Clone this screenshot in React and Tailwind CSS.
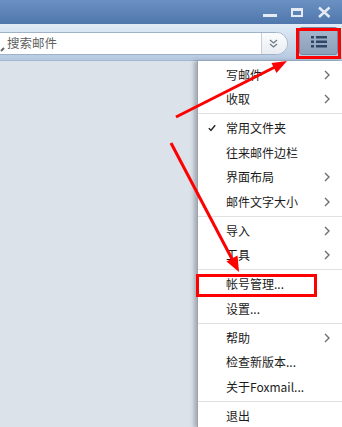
import React from "react";

const Chevron = () => (
  <svg width="6" height="10" viewBox="0 0 6 10" className="absolute right-[12px] top-1/2 -translate-y-1/2">
    <path d="M1 1 L5 5 L1 9" fill="none" stroke="#707070" strokeWidth="1.4" />
  </svg>
);

const Item = ({ label, sub, check }) => (
  <div className="relative h-[24.5px] flex items-center pl-[28px] text-[12px] leading-none text-[#1b1b1b]">
    {check && (
      <svg width="8" height="7" viewBox="0 0 8 7" className="absolute left-[10px] top-1/2 -translate-y-1/2">
        <path d="M0.8 3.6 L2.9 5.9 L7.2 0.8" fill="none" stroke="#222" strokeWidth="1.4" />
      </svg>
    )}
    <span>{label}</span>
    {sub && <Chevron />}
  </div>
);

const Sep = () => (
  <div className="h-[4.5px] flex items-center">
    <div className="h-px w-full bg-[#e1e1e1]" />
  </div>
);

export default function App() {
  return (
    <div className="relative w-[342px] h-[427px] overflow-hidden bg-[#dbe2e9] flex flex-col font-['Noto_Sans_CJK_SC','Noto_Sans',sans-serif]">
      {/* title bar */}
      <div className="h-[24px] shrink-0 bg-gradient-to-b from-[#6b91c2] to-[#5077ad] flex justify-end">
        <svg width="90" height="24" viewBox="252 0 90 24">
          <rect x="263" y="14" width="14" height="3" fill="#e4ebf4" />
          <rect x="292" y="9" width="10" height="7" fill="none" stroke="#e4ebf4" strokeWidth="2" />
          <rect x="291" y="8" width="12" height="3" fill="#e4ebf4" />
          <path d="M319 7.5 L329.5 17 M329.5 7.5 L319 17" stroke="#e4ebf4" strokeWidth="2.4" />
        </svg>
      </div>
      {/* toolbar */}
      <div className="h-[37px] shrink-0 bg-gradient-to-b from-[#e2ecf7] to-[#b5c9e1] border-b border-[#a3b7ce] flex items-start">
        <div className="ml-[-12px] mt-[8px] w-[300px] h-[23px] bg-white border border-[#a0b2c7] rounded-r-full flex items-center overflow-hidden">
          <svg width="20" height="22" viewBox="0 0 20 22" className="shrink-0">
            <path d="M12 18 L15 15" stroke="#666" strokeWidth="2" />
          </svg>
          <span className="text-[12.5px] leading-none text-[#5f5f5f] ml-[-2px]">搜索邮件</span>
          <div className="ml-auto h-full w-[26px] border-l border-[#c5cfda] bg-gradient-to-b from-[#fbfcfd] to-[#e9edf2] flex items-center justify-center pr-[3px]">
            <svg width="9" height="9" viewBox="0 0 9 9">
              <path d="M1 1 L4.5 4 L8 1 M1 5 L4.5 8 L8 5" fill="none" stroke="#6f7a86" strokeWidth="1.3" />
            </svg>
          </div>
        </div>
        <div className="ml-[11px] mt-[3px] w-[39px] h-[28px] rounded-[3px] border border-[#7188a5] bg-gradient-to-b from-[#a7b8cd] to-[#8b9fb9] flex items-center justify-center">
          <svg width="18" height="13" viewBox="0 0 18 13">
            <rect x="1" y="1" width="3" height="2.5" fill="#2e4766" />
            <rect x="6" y="1" width="11" height="2.5" fill="#2e4766" />
            <rect x="1" y="5.5" width="3" height="2.5" fill="#2e4766" />
            <rect x="6" y="5.5" width="11" height="2.5" fill="#2e4766" />
            <rect x="1" y="10" width="3" height="2.5" fill="#2e4766" />
            <rect x="6" y="10" width="11" height="2.5" fill="#2e4766" />
          </svg>
        </div>
      </div>
      {/* body */}
      <div className="flex-1 flex">
        <div className="flex-1" />
        <div className="w-[145px] bg-white border-l border-[#9aa3ad] shadow-[-3px_0_4px_rgba(60,70,80,0.35)] pt-[1.5px]">
          <Item label="写邮件" sub />
          <Item label="收取" sub />
          <Sep />
          <Item label="常用文件夹" check />
          <Item label="往来邮件边栏" />
          <Item label="界面布局" sub />
          <Item label="邮件文字大小" sub />
          <Sep />
          <Item label="导入" sub />
          <Item label="工具" sub />
          <Sep />
          <Item label="帐号管理..." />
          <Item label="设置..." />
          <Sep />
          <Item label="帮助" sub />
          <Item label="检查新版本..." />
          <Item label="关于Foxmail..." />
          <Sep />
          <Item label="退出" />
        </div>
      </div>
      {/* annotation overlay */}
      <svg className="absolute inset-0 pointer-events-none" width="342" height="427" viewBox="0 0 342 427">
        <rect x="297.5" y="29.5" width="42" height="28" fill="none" stroke="#ff0000" strokeWidth="3" />
        <rect x="197.5" y="275.5" width="118" height="20" fill="none" stroke="#ff0000" strokeWidth="3" />
        <line x1="176" y1="117" x2="275" y2="67" stroke="#ff0000" strokeWidth="3" />
        <polygon points="287,61 271.5,63 276.5,73" fill="#ff0000" />
        <line x1="171" y1="143" x2="232" y2="259" stroke="#ff0000" strokeWidth="3" />
        <polygon points="239,272 226.5,261.5 237.5,255.5" fill="#ff0000" />
      </svg>
    </div>
  );
}
